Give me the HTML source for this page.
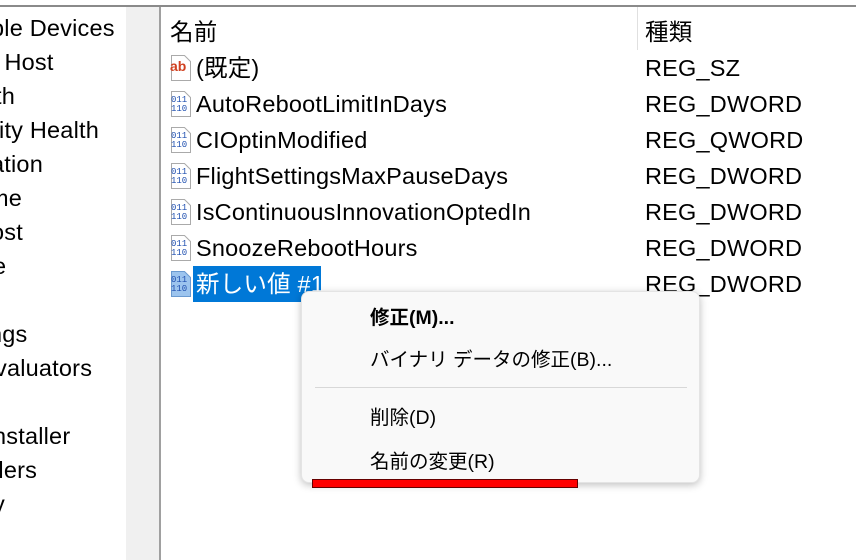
<!DOCTYPE html>
<html><head><meta charset="utf-8"><style>
body{margin:0;width:856px;height:560px;overflow:hidden;background:#fff;font-family:"Liberation Sans","Noto Sans CJK JP",sans-serif;position:relative;color:#000}
.a{position:absolute;white-space:nowrap;font-size:23.5px;line-height:30px;letter-spacing:0.2px}
.ico{position:absolute;left:170px;width:22px;height:28px}
.m{position:absolute;left:370px;font-size:19.5px;line-height:28px;white-space:nowrap}
</style></head><body>
<div style="position:absolute;left:0;top:5px;width:856px;height:2px;background:#8a8a8a"></div>
<div style="position:absolute;left:126px;top:7px;width:33px;height:553px;background:#f0f0f0"></div>
<div style="position:absolute;left:159px;top:7px;width:2px;height:553px;background:#a0a0a0"></div>
<div style="position:absolute;left:637px;top:7px;width:1px;height:43px;background:#e0e0e0"></div>
<div class="a" style="left:-9px;top:13px">ple Devices</div>
<div class="a" style="left:-9px;top:47px">t Host</div>
<div class="a" style="left:-5px;top:81px">th</div>
<div class="a" style="left:-9px;top:115px">rity Health</div>
<div class="a" style="left:-9px;top:149px">ation</div>
<div class="a" style="left:-11px;top:183px">me</div>
<div class="a" style="left:-9px;top:217px">ost</div>
<div class="a" style="left:-7px;top:251px">e</div>
<div class="a" style="left:-11px;top:319px">ngs</div>
<div class="a" style="left:-5px;top:353px">valuators</div>
<div class="a" style="left:-7px;top:387px">.</div>
<div class="a" style="left:-7px;top:421px">nstaller</div>
<div class="a" style="left:-7px;top:455px">llers</div>
<div class="a" style="left:-7px;top:489px">y</div>

<div class="a" style="left:170px;top:17px">名前</div>
<div class="a" style="left:645px;top:17px">種類</div>

<svg class="ico" style="top:54px" viewBox="0 0 22 28"><path d="M1.5 1.5h13l6 6v19h-19z" fill="#fff" stroke="#aaa"/><text x="0" y="17" font-size="14" font-weight="bold" fill="#d04020" font-family="Liberation Sans">ab</text></svg>
<div class="a" style="left:196px;top:53px">(既定)</div><div class="a" style="left:645px;top:53px">REG_SZ</div>

<svg class="ico" style="top:90px" viewBox="0 0 22 28"><path d="M1.5 1.5h13l6 6v19h-19z" fill="#fff" stroke="#aaa"/><text x="1" y="12" font-size="9" fill="#2050b0" font-family="Liberation Mono">011</text><text x="1" y="21" font-size="9" fill="#2050b0" font-family="Liberation Mono">110</text></svg>
<div class="a" style="left:196px;top:89px">AutoRebootLimitInDays</div><div class="a" style="left:645px;top:89px">REG_DWORD</div>
<svg class="ico" style="top:126px" viewBox="0 0 22 28"><path d="M1.5 1.5h13l6 6v19h-19z" fill="#fff" stroke="#aaa"/><text x="1" y="12" font-size="9" fill="#2050b0" font-family="Liberation Mono">011</text><text x="1" y="21" font-size="9" fill="#2050b0" font-family="Liberation Mono">110</text></svg>
<div class="a" style="left:196px;top:125px">CIOptinModified</div><div class="a" style="left:645px;top:125px">REG_QWORD</div>
<svg class="ico" style="top:162px" viewBox="0 0 22 28"><path d="M1.5 1.5h13l6 6v19h-19z" fill="#fff" stroke="#aaa"/><text x="1" y="12" font-size="9" fill="#2050b0" font-family="Liberation Mono">011</text><text x="1" y="21" font-size="9" fill="#2050b0" font-family="Liberation Mono">110</text></svg>
<div class="a" style="left:196px;top:161px">FlightSettingsMaxPauseDays</div><div class="a" style="left:645px;top:161px">REG_DWORD</div>
<svg class="ico" style="top:198px" viewBox="0 0 22 28"><path d="M1.5 1.5h13l6 6v19h-19z" fill="#fff" stroke="#aaa"/><text x="1" y="12" font-size="9" fill="#2050b0" font-family="Liberation Mono">011</text><text x="1" y="21" font-size="9" fill="#2050b0" font-family="Liberation Mono">110</text></svg>
<div class="a" style="left:196px;top:197px">IsContinuousInnovationOptedIn</div><div class="a" style="left:645px;top:197px">REG_DWORD</div>
<svg class="ico" style="top:234px" viewBox="0 0 22 28"><path d="M1.5 1.5h13l6 6v19h-19z" fill="#fff" stroke="#aaa"/><text x="1" y="12" font-size="9" fill="#2050b0" font-family="Liberation Mono">011</text><text x="1" y="21" font-size="9" fill="#2050b0" font-family="Liberation Mono">110</text></svg>
<div class="a" style="left:196px;top:233px">SnoozeRebootHours</div><div class="a" style="left:645px;top:233px">REG_DWORD</div>
<svg class="ico" style="top:270px" viewBox="0 0 22 28"><path d="M1.5 1.5h13l6 6v19h-19z" fill="#9cc4ee" stroke="#6a9ad0"/><text x="1" y="12" font-size="9" fill="#2050b0" font-family="Liberation Mono">011</text><text x="1" y="21" font-size="9" fill="#2050b0" font-family="Liberation Mono">110</text></svg>
<div style="position:absolute;left:193px;top:266px;width:128px;height:36px;background:#0078d7"></div>
<div class="a" style="left:196px;top:269px;color:#fff">新しい値 #1</div><div class="a" style="left:645px;top:269px">REG_DWORD</div>

<div style="position:absolute;left:301px;top:291px;width:399px;height:192px;background:#f9f9f9;border-radius:8px;box-shadow:0 2px 8px rgba(0,0,0,.25);border:1px solid #e4e4e4;box-sizing:border-box"></div>
<div class="m" style="top:304px;font-weight:bold">修正(M)...</div>
<div class="m" style="top:346px">バイナリ データの修正(B)...</div>
<div style="position:absolute;left:315px;top:387px;width:372px;height:1px;background:#d8d8d8"></div>
<div class="m" style="top:404px">削除(D)</div>
<div class="m" style="top:448px">名前の変更(R)</div>
<div style="position:absolute;left:312px;top:479px;width:266px;height:9px;background:#f00;border:1px solid #600;box-sizing:border-box"></div>
</body></html>
